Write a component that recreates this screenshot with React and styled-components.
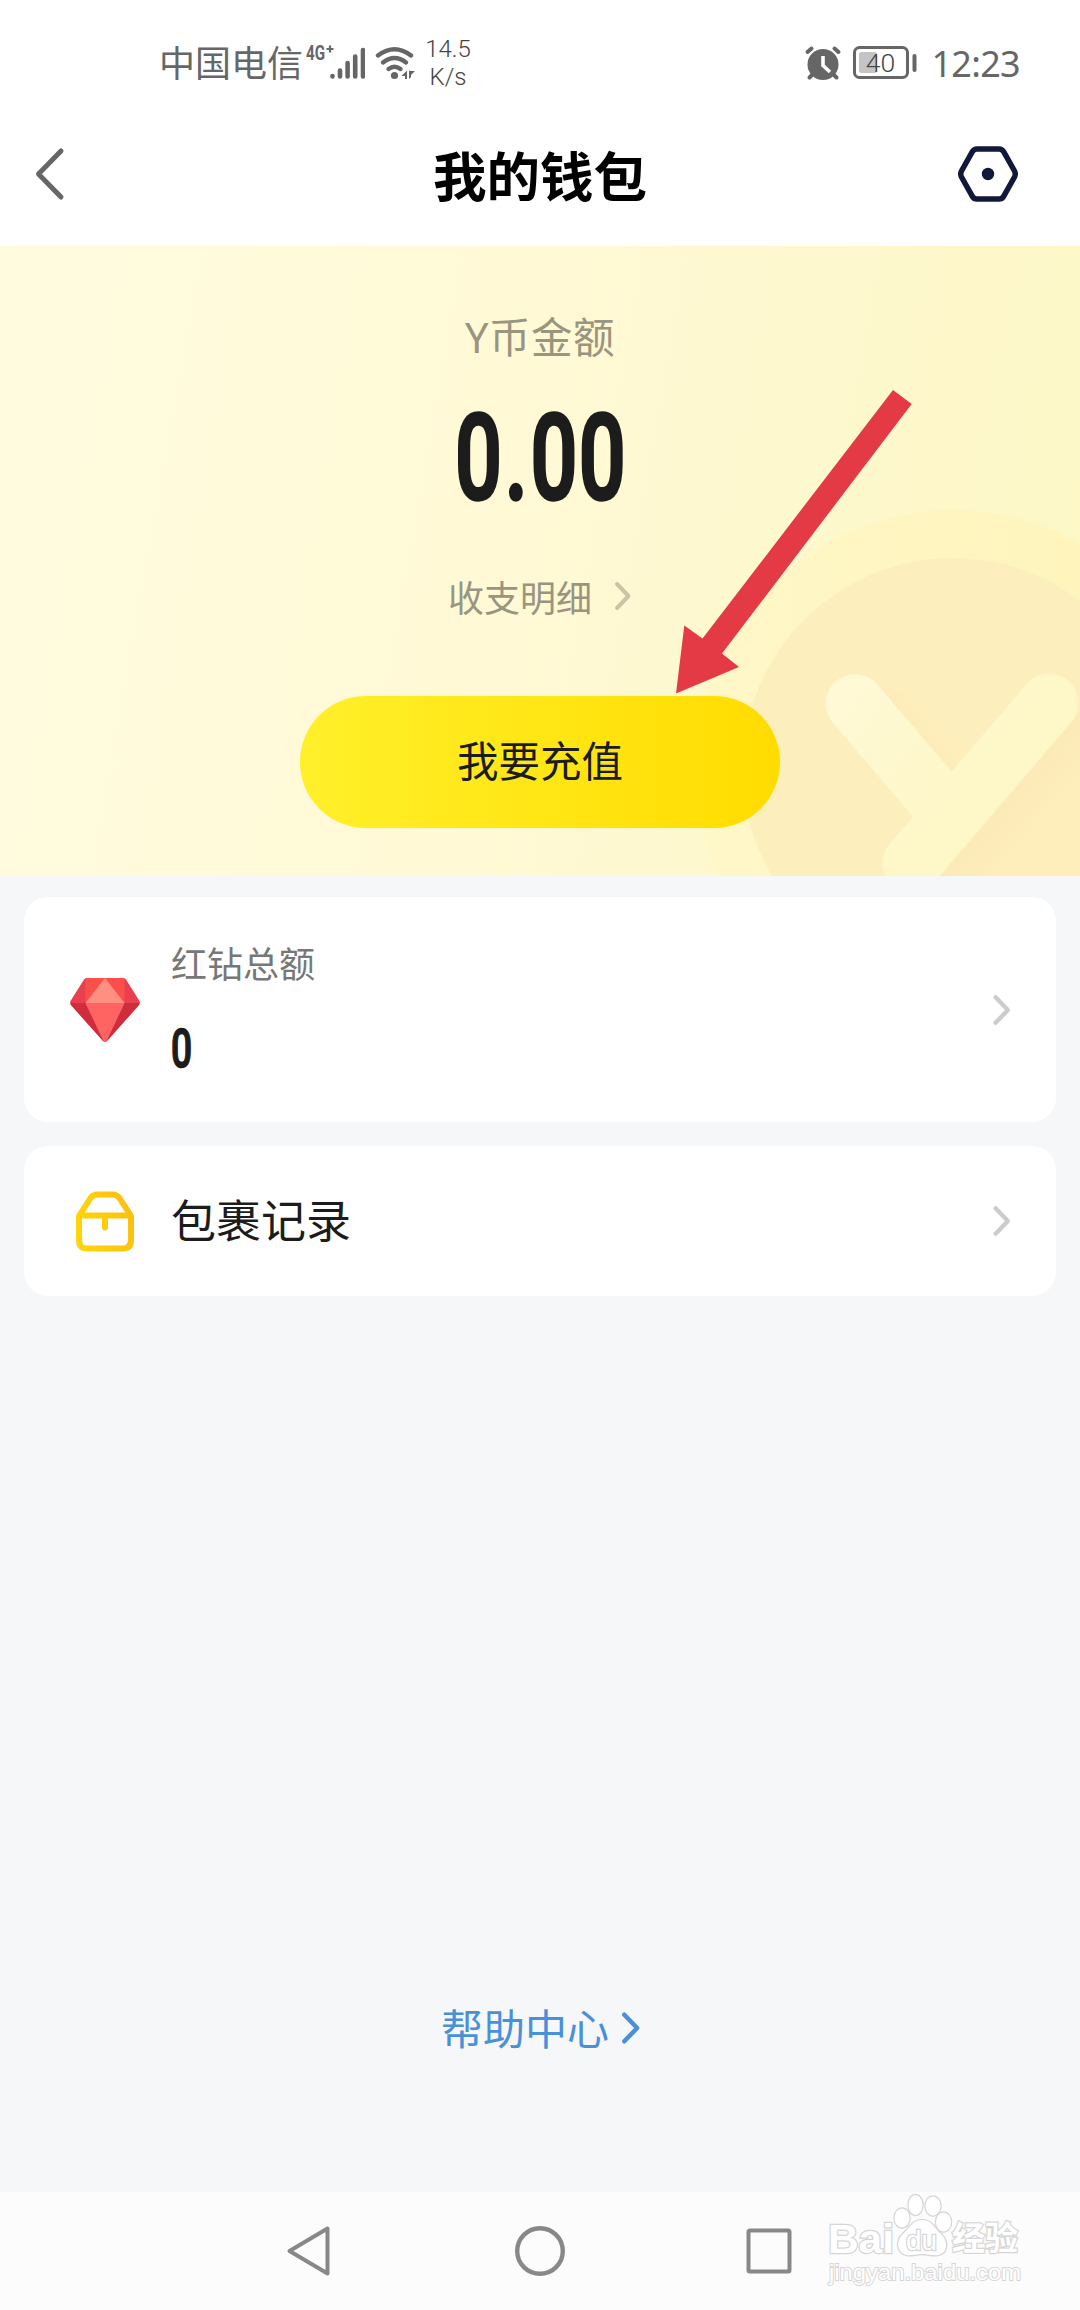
import React from 'react';
import styled, { createGlobalStyle } from 'styled-components';

const GlobalStyle = createGlobalStyle`
  * {
    box-sizing: border-box;
  }
  body {
    margin: 0;
    background: #f5f7f9;
    font-family: Roboto, "Noto Sans CJK SC", sans-serif;
  }
  svg {
    display: block;
    flex: none;
  }
`;

const Screen = styled.div`
  position: relative;
  display: flex;
  flex-direction: column;
  width: 1080px;
  height: 2310px;
  overflow: hidden;
  background: #f5f7f9;
`;

/* status bar */
const StatusBar = styled.div`
  display: flex;
  align-items: center;
  justify-content: space-between;
  height: 102px;
  padding: 22px 60px 0 159px;
  background: #fff;
  color: #666;
`;

const StatusGroup = styled.div`
  display: flex;
  align-items: center;
`;

const Carrier = styled.span`
  margin-top: -2px;
  font-family: "Noto Sans CJK SC", sans-serif;
  font-size: 36px;
  line-height: 40px;
`;

const WifiSvg = styled.svg`
  margin-left: 9px;
`;

const BatterySvg = styled.svg`
  margin-left: 11px;
`;

const Speed = styled.div`
  width: 46px;
  margin-left: 7px;
  padding-top: 1px;
  font-size: 24px;
  font-weight: 300;
  line-height: 28px;
  text-align: center;
  color: #444;
`;

const Clock = styled.span`
  margin-left: 14px;
  padding-top: 3px;
  font-family: "Noto Sans", sans-serif;
  font-size: 36px;
  line-height: 40px;
  letter-spacing: -0.7px;
`;

/* title bar */
const TitleBar = styled.header`
  display: flex;
  align-items: center;
  height: 144px;
  padding: 0 61px 0 32px;
  background: #fff;
`;

const Title = styled.h1`
  flex: 1;
  margin: 0;
  padding-left: 55px;
  font-family: "Noto Sans CJK SC", sans-serif;
  font-size: 53.5px;
  font-weight: 700;
  line-height: 60px;
  text-align: center;
  color: #000;
`;

/* balance */
const Balance = styled.section`
  position: relative;
  display: flex;
  flex-direction: column;
  align-items: center;
  height: 630px;
  padding-top: 61px;
  background: linear-gradient(100deg, #fffbdf 0%, #fff9d5 50%, #fcf7c4 100%);
`;

const Coin = styled.svg`
  position: absolute;
  right: 0;
  bottom: 0;
`;

const BalanceLabel = styled.div`
  position: relative;
  font-family: "Noto Sans", "Noto Sans CJK SC", sans-serif;
  font-size: 41.5px;
  line-height: 60px;
  letter-spacing: 0.5px;
  color: #99957f;
`;

const Digits = styled.div`
  position: relative;
  font-family: Roboto, sans-serif;
  font-weight: 500;
  font-size: ${(p) => p.$size}px;
  line-height: 1;
  letter-spacing: ${(p) => p.$spacing || 0}px;
  color: #1c1c1c;
  -webkit-text-stroke: ${(p) => p.$size / 34}px #1c1c1c;
  transform: scaleX(0.7);
  transform-origin: ${(p) => p.$origin || 'center'};
`;

const Point = styled.span`
  margin: 0 2px;
`;

const Amount = styled.div`
  height: 121px;
  margin-top: 33px;
  padding-left: 2px;
`;

const Detail = styled.div`
  position: relative;
  display: flex;
  align-items: center;
  gap: 22px;
  margin-top: 48px;
  height: 54px;
  font-family: "Noto Sans CJK SC", sans-serif;
  font-size: 36px;
  line-height: 54px;
  color: #99957f;
`;

const Recharge = styled.button`
  position: relative;
  width: 480px;
  height: 132px;
  margin-top: 73px;
  padding: 0 0 6px;
  border: 0;
  border-radius: 66px;
  background: linear-gradient(90deg, #fff02a, #ffdc00);
  font-family: "Noto Sans CJK SC", sans-serif;
  font-size: 41.5px;
  color: #1c1c1c;
`;

/* list */
const List = styled.div`
  display: flex;
  flex: 1;
  flex-direction: column;
  gap: 24px;
  padding: 21px 24px 0;
`;

const Card = styled.div`
  display: flex;
  align-items: center;
  height: ${(p) => p.$height}px;
  padding: 0 44px;
  border-radius: 24px;
  background: #fff;
`;

const CardBody = styled.div`
  flex: 1;
  margin-left: 29px;
  font-family: "Noto Sans CJK SC", sans-serif;
`;

const CardLabel = styled.div`
  margin: -8px 0 35px;
  font-size: 36px;
  line-height: 52px;
  color: #777;
`;

const CardTitle = styled.div`
  padding-bottom: 4px;
  font-size: 45px;
  line-height: 60px;
  color: #1c1c1c;
`;

const Help = styled.div`
  display: flex;
  align-items: center;
  justify-content: center;
  gap: 12px;
  height: 60px;
  margin-bottom: 134px;
  padding-left: 2px;
  font-family: "Noto Sans CJK SC", sans-serif;
  font-size: 42px;
  line-height: 56px;
  color: #4a90d9;
`;

const HelpText = styled.span`
  padding-bottom: 3px;
`;

const NavBar = styled.nav`
  display: flex;
  align-items: center;
  justify-content: space-between;
  height: 118px;
  padding: 0 286px 0 284px;
  background: #fcfcfc;
`;

const Pointer = styled.svg`
  position: absolute;
  left: 670px;
  top: 384px;
`;

const Watermark = styled.svg`
  position: absolute;
  left: 820px;
  top: 2186px;
`;

const Chevron = ({ color, width = 18, height = 30, stroke = 4 }) => (
  <svg width={width} height={height} viewBox="0 0 18 30" fill="none">
    <path d="M3 3 L14.500 15 L3 27" stroke={color} strokeWidth={stroke} strokeLinecap="round" strokeLinejoin="round" />
  </svg>
);

const Signal = () => (
  <svg width="62" height="40" viewBox="0 0 62 40">
    <text x="3" y="18" fontFamily="Roboto" fontWeight="700" fontSize="20" fill="#666" textLength="19" lengthAdjust="spacingAndGlyphs">4G</text>
    <path d="M27 3.500v7M23.500 7h7" stroke="#666" strokeWidth="2.200" />
    <g stroke="#666" strokeWidth="4.600" strokeLinecap="round">
      <path d="M29.500 34v.5M37 28.500v6M44.600 21v13.500M52.200 14.500v20M60 8v26.500" />
    </g>
  </svg>
);

const Wifi = () => (
  <WifiSvg width="44" height="40" viewBox="0 0 44 40" fill="none">
    <g stroke="#666" strokeWidth="4.400" strokeLinecap="round">
      <path d="M4 13.500Q20.500 1 37 13.500" />
      <path d="M9 20.500Q20.500 11.500 32 20.500" />
      <path d="M14.500 27Q20.500 22.500 26.500 27" />
    </g>
    <circle cx="20.500" cy="33.500" r="3.600" fill="#666" />
    <path d="M33 28.500v8.500h-2v-3h-3.500zM35 28.500v8.500l2-2v-2l4-4h-4z" fill="#666" />
  </WifiSvg>
);

const Alarm = () => (
  <svg width="38" height="40" viewBox="0 0 38 40" fill="none">
    <circle cx="19" cy="22.500" r="15.500" fill="#666" />
    <g stroke="#666" strokeWidth="4" strokeLinecap="round">
      <path d="M3.500 10L7.500 6.500M34.500 10L30.500 6.500M8 33L5.500 35.500M30 33L32.500 35.500" />
    </g>
    <path d="M19 14v9.500l7 6.500" stroke="#fff" strokeWidth="3.600" />
  </svg>
);

const Battery = () => (
  <BatterySvg width="64" height="40" viewBox="0 0 64 40">
    <rect x="1.500" y="5.500" width="53" height="30" rx="5" fill="#fff" stroke="#666" strokeWidth="3" />
    <rect x="6" y="10" width="18" height="21" rx="2.500" fill="#c4c4c4" />
    <text x="27.500" y="30" textAnchor="middle" fontFamily="Roboto" fontWeight="300" fontSize="26.500" fill="#444">40</text>
    <rect x="59.500" y="12" width="4" height="18" rx="2" fill="#666" />
  </BatterySvg>
);

const BackIcon = () => (
  <svg width="36" height="60" viewBox="0 0 36 60" fill="none">
    <path d="M29 7L6.500 30L29 53" stroke="#666" strokeWidth="5" strokeLinecap="round" strokeLinejoin="round" />
  </svg>
);

const HexIcon = () => (
  <svg width="62" height="60" viewBox="0 0 62 60" fill="none">
    <path d="M20 5H42Q45 5 46.500 7.500L57.500 27Q59 30 57.500 33L46.500 52.500Q45 55 42 55H20Q17 55 15.500 52.500L4.500 33Q3 30 4.500 27L15.500 7.500Q17 5 20 5Z" stroke="#12183a" strokeWidth="5.500" />
    <circle cx="31" cy="30" r="6.200" fill="#12183a" />
  </svg>
);

const Gem = () => (
  <svg width="74" height="70" viewBox="0 0 74 70">
    <path d="M19 3H55Q57 3 58 4.500L71.500 26Q72.500 28 71 30L39 66Q37 68 35 66L3 30Q1.500 28 2.500 26L16 4.500Q17 3 19 3Z" fill="#e8404f" />
    <path d="M17.500 3H37L17.500 28Z" fill="#fb5049" />
    <path d="M56.500 3H37L56.500 28Z" fill="#fb5049" />
    <path d="M37 3L17.500 28H56.500Z" fill="#ff8f80" />
    <path d="M2.500 28H17.500L36 67L3 30Z" fill="#cf2c3d" />
    <path d="M71.500 28H56.500L38 67L71 30Z" fill="#cf2c3d" />
    <path d="M17.500 28H56.500L38.500 66Q37 67.500 35.500 66Z" fill="#ff6463" />
  </svg>
);

const Package = () => (
  <svg width="74" height="66" viewBox="0 0 74 66" fill="none">
    <defs>
      <linearGradient id="pkg" gradientUnits="userSpaceOnUse" x1="8" y1="40" x2="66" y2="24">
        <stop offset="0" stopColor="#ffd60a" />
        <stop offset="1" stopColor="#fbbf10" />
      </linearGradient>
    </defs>
    <g stroke="url(#pkg)" strokeWidth="6" strokeLinejoin="round" strokeLinecap="round">
      <path d="M11 28L22.500 10Q25 6.500 30 6.500H44Q49 6.500 51.500 10L63 28V52Q63 60.500 54.500 60.500H19.500Q11 60.500 11 52Z" />
      <path d="M12 27.500H62M37 28V39.500" />
    </g>
  </svg>
);

const App = () => (
  <Screen>
    <GlobalStyle />
    <StatusBar>
      <StatusGroup>
        <Carrier>中国电信</Carrier>
        <Signal />
        <Wifi />
        <Speed>14.5 K/s</Speed>
      </StatusGroup>
      <StatusGroup>
        <Alarm />
        <Battery />
        <Clock>12:23</Clock>
      </StatusGroup>
    </StatusBar>

    <TitleBar>
      <BackIcon />
      <Title>我的钱包</Title>
      <HexIcon />
    </TitleBar>

    <Balance>
      <Coin width="400" height="380" viewBox="680 496 400 380">
        <defs>
          <linearGradient id="ring" x1="0" y1="0" x2="1" y2="0">
            <stop offset="0" stopColor="#fef7c8" />
            <stop offset="1" stopColor="#fef3b8" />
          </linearGradient>
          <linearGradient id="arm" gradientUnits="userSpaceOnUse" x1="830" y1="690" x2="960" y2="800">
            <stop offset="0" stopColor="#fff9d6" />
            <stop offset="1" stopColor="#fef7c8" />
          </linearGradient>
          <linearGradient id="shade" gradientUnits="userSpaceOnUse" x1="1004" y1="797" x2="1040" y2="828">
            <stop offset="0" stopColor="#fce9b8" />
            <stop offset="1" stopColor="#fdeebb" />
          </linearGradient>
          <linearGradient id="shadeTop" gradientUnits="userSpaceOnUse" x1="908" y1="733" x2="935" y2="710">
            <stop offset="0" stopColor="#fdebb9" />
            <stop offset="1" stopColor="#fdefbd" />
          </linearGradient>
        </defs>
        <circle cx="953" cy="768.500" r="258.500" fill="url(#ring)" />
        <circle cx="953" cy="768.500" r="210.500" fill="#fdefbd" />
        <path d="M877 685L953 771L975 745L920 695Z" fill="url(#shadeTop)" />
        <path d="M1071 723L1080 712V876H941Z" fill="url(#shade)" />
        <g stroke="url(#arm)" strokeWidth="58.500" strokeLinecap="round">
          <path d="M855 703.500L938 801" />
          <path d="M1049 703L911.700 863" />
        </g>
      </Coin>
      <BalanceLabel>Y币金额</BalanceLabel>
      <Amount>
        <Digits $size={118} $spacing={2}>0<Point>.</Point>00</Digits>
      </Amount>
      <Detail>
        收支明细
        <Chevron color="#c9c5a5" />
      </Detail>
      <Recharge>我要充值</Recharge>
    </Balance>

    <List>
      <Card $height={225}>
        <Gem />
        <CardBody>
          <CardLabel>红钻总额</CardLabel>
          <Digits $size={53} $origin="left">0</Digits>
        </CardBody>
        <Chevron color="#ccc" width={20} height={32} />
      </Card>
      <Card $height={150}>
        <Package />
        <CardBody>
          <CardTitle>包裹记录</CardTitle>
        </CardBody>
        <Chevron color="#ccc" width={20} height={32} />
      </Card>
    </List>

    <Help>
      <HelpText>帮助中心</HelpText>
      <Chevron color="#4a90d9" width={20} height={34} />
    </Help>

    <NavBar>
      <svg width="48" height="56" viewBox="0 0 48 56" fill="none">
        <path d="M43.500 5.500V50.500L5.500 28Z" stroke="#888" strokeWidth="4" strokeLinejoin="round" />
      </svg>
      <svg width="56" height="56" viewBox="0 0 56 56" fill="none">
        <circle cx="30" cy="28" r="22.800" stroke="#888" strokeWidth="4.400" />
      </svg>
      <svg width="50" height="50" viewBox="0 0 50 50" fill="none">
        <rect x="4.500" y="4.500" width="41" height="41" rx="1.500" stroke="#888" strokeWidth="4" />
      </svg>
    </NavBar>

    <Pointer width="250" height="316" viewBox="670 384 250 316">
      <path d="M893 390L911.700 404L722 653.500L739 667L676 693.500L684.300 625.500L702.500 638.500Z" fill="#e33a45" />
    </Pointer>

    <Watermark width="220" height="110" viewBox="820 2186 220 110">
      <g fill="#fff" stroke="#d6d6d6" strokeWidth="2.500" paintOrder="stroke">
        <ellipse cx="902" cy="2218" rx="7.500" ry="9.500" />
        <ellipse cx="915.500" cy="2205" rx="7" ry="10" />
        <ellipse cx="933" cy="2206" rx="7.500" ry="9.500" />
        <ellipse cx="943.500" cy="2222" rx="7.500" ry="9.500" />
        <path d="M922 2220C912 2220 910 2228 904 2233C898 2238 896 2246 901 2252C906 2258 914 2254 922 2254C930 2254 938 2258 944 2252C948 2246 946 2238 940 2233C934 2228 932 2220 922 2220Z" />
        <text x="828" y="2253" fontFamily="Liberation Sans" fontWeight="700" fontSize="41" textLength="66" lengthAdjust="spacingAndGlyphs">Bai</text>
        <text x="906" y="2250" fontFamily="Liberation Sans" fontSize="28" textLength="31" lengthAdjust="spacingAndGlyphs">du</text>
        <text x="952" y="2250" fontFamily="Noto Sans CJK SC" fontWeight="700" fontSize="33">经验</text>
        <text x="829" y="2280" fontFamily="Liberation Sans" fontSize="22" strokeWidth="1.800" textLength="192" lengthAdjust="spacingAndGlyphs">jingyan.baidu.com</text>
      </g>
    </Watermark>
  </Screen>
);

export default App;
